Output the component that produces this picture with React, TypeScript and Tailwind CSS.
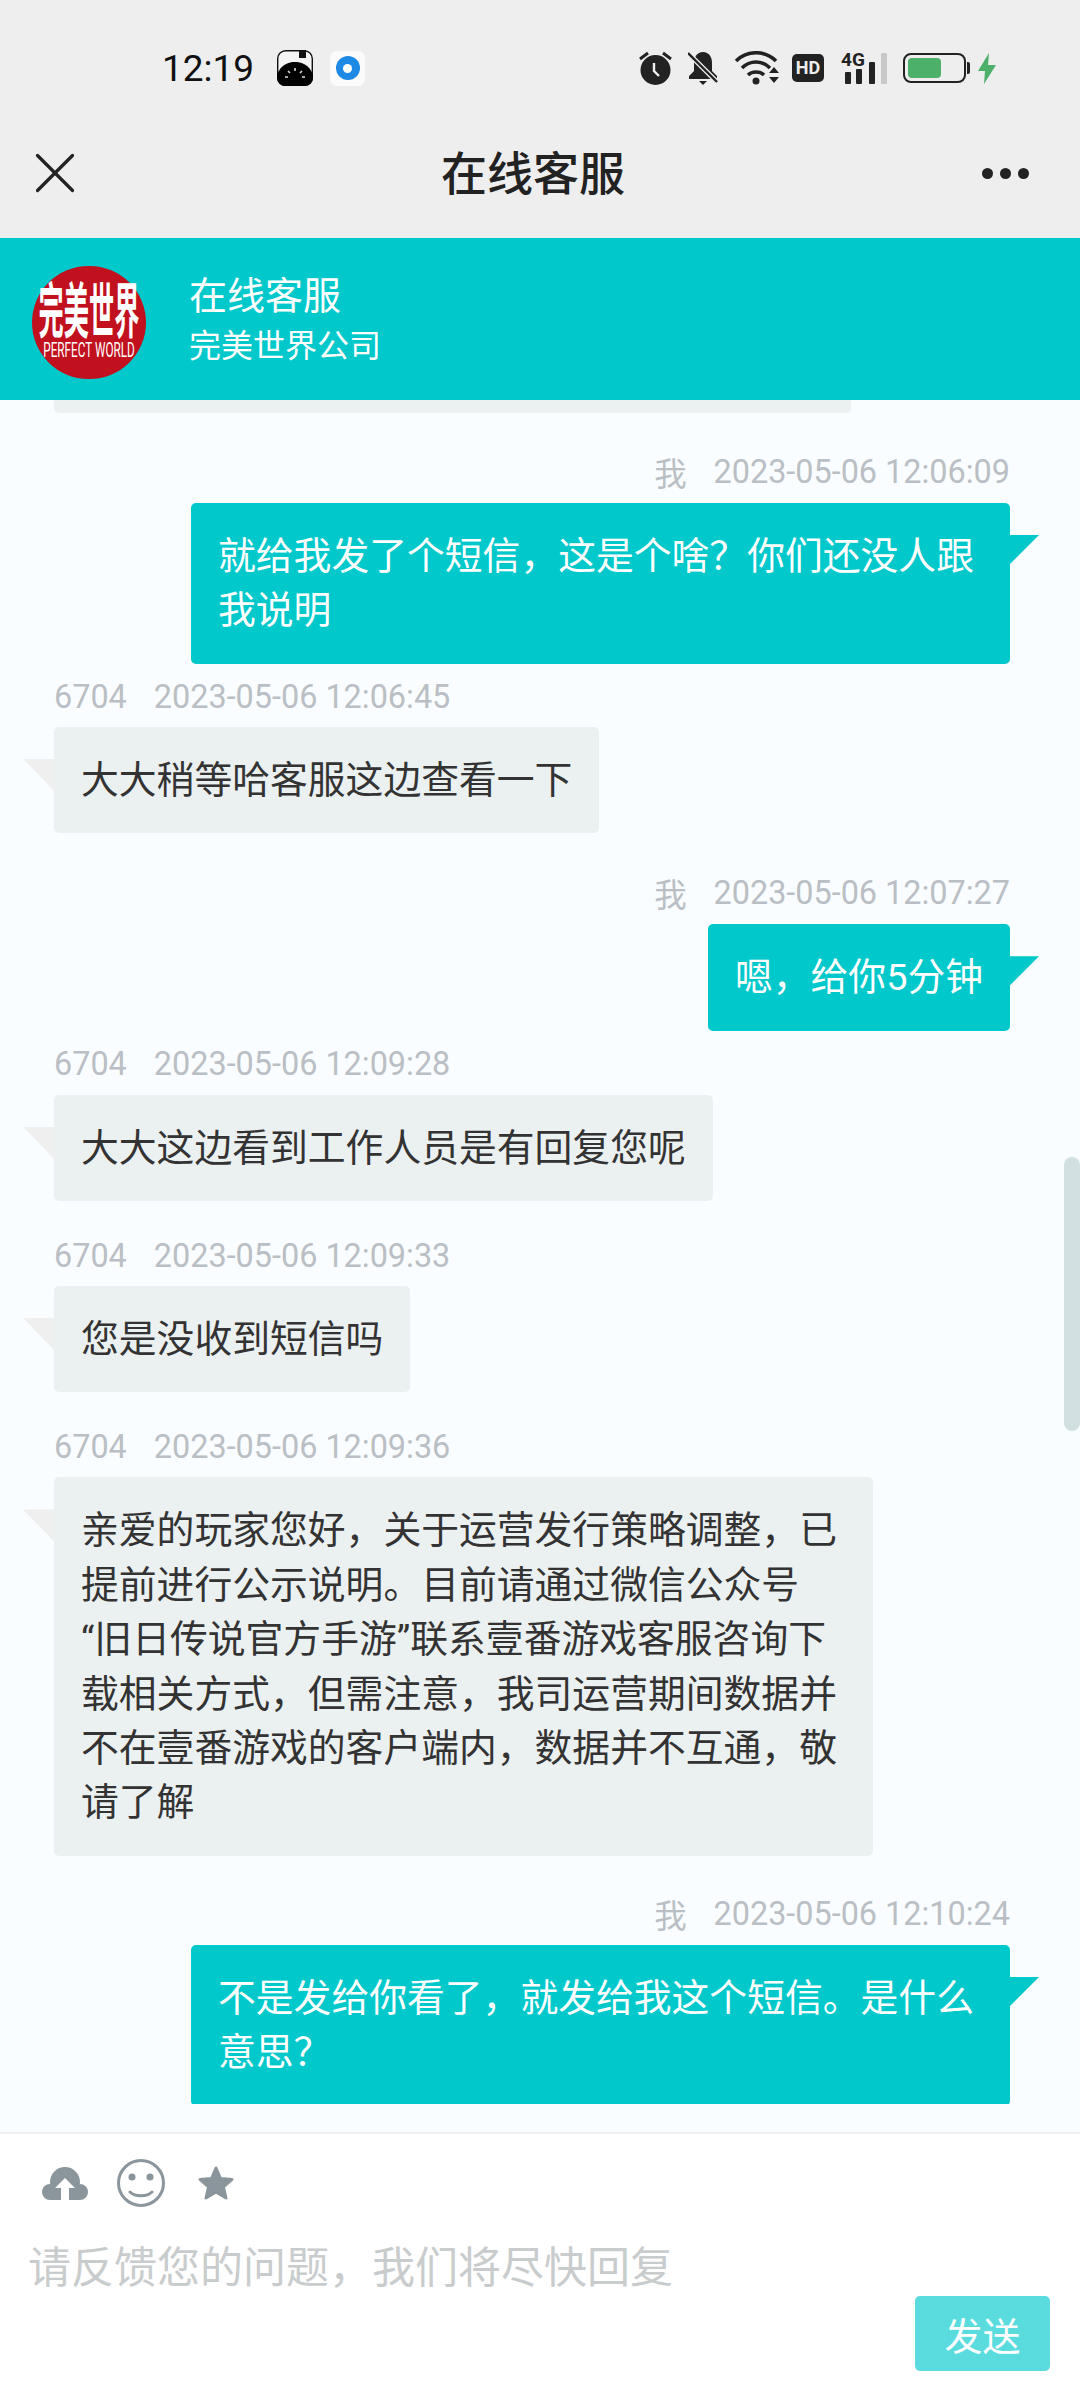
import { X } from "lucide-react";

const cjk = "font-['Noto_Sans_CJK_SC',sans-serif]";
const body = "font-['Roboto','Noto_Sans_CJK_SC',sans-serif]";

type Msg = { who: string; time: string; text: string; mine?: boolean; top: string };

const messages: Msg[] = [
  { who: "我", time: "2023-05-06 12:06:09", text: "就给我发了个短信，这是个啥？你们还没人跟我说明", mine: true, top: "mt-[37px]" },
  { who: "6704", time: "2023-05-06 12:06:45", text: "大大稍等哈客服这边查看一下", top: "mt-[11px]" },
  { who: "我", time: "2023-05-06 12:07:27", text: "嗯，给你5分钟", mine: true, top: "mt-[38px]" },
  { who: "6704", time: "2023-05-06 12:09:28", text: "大大这边看到工作人员是有回复您呢", top: "mt-[12px]" },
  { who: "6704", time: "2023-05-06 12:09:33", text: "您是没收到短信吗", top: "mt-[33px]" },
  { who: "6704", time: "2023-05-06 12:09:36", text: "亲爱的玩家您好，关于运营发行策略调整，已提前进行公示说明。目前请通过微信公众号\u200b“旧日传说官方手游”联系壹番游戏客服咨询下载相关方式，但需注意，我司运营期间数据并不在壹番游戏的客户端内，数据并不互通，敬请了解", top: "mt-[33px]" },
  { who: "我", time: "2023-05-06 12:10:24", text: "不是发给你看了，就发给我这个短信。是什么意思？", mine: true, top: "mt-[36px]" },
];

function StatusBar() {
  return (
    <div className="flex h-[136px] items-center pr-[83px] pl-[162px]">
      <span className="font-['Roboto',sans-serif] text-[37px] leading-none text-[#111]">12:19</span>
      <svg width="36" height="36" viewBox="0 0 36 36" className="ml-[23px]">
        <rect x="0.7" y="0.7" width="34.600" height="34.600" rx="8" fill="#f4f4f4" stroke="#111" strokeWidth="1.4" />
        <path d="M0 25C4 14 12 12 18 12s14 2 18 13v3a8 8 0 0 1-8 8H8a8 8 0 0 1-8-8z" fill="#000" />
        <path d="M22 0h7v8h-7z" fill="#111" />
        <path d="M18 18v3M11 21l2 2M25 21l-2 2M8 27h3M25 27h3" stroke="#ddd" strokeWidth="1.6" />
      </svg>
      <div className="ml-[17px] flex h-[35px] w-[35px] items-center justify-center rounded-[7px] bg-[#fbfbfb]">
        <div className="flex h-[24px] w-[24px] items-center justify-center rounded-full bg-[#1e88e5]">
          <div className="h-[9px] w-[9px] rounded-full bg-white" />
        </div>
      </div>
      <div className="ml-auto flex items-center">
        <svg width="33" height="34" viewBox="0 0 33 34">
          <circle cx="16.500" cy="19" r="15" fill="#222" />
          <path d="M15 12v8l5 5" stroke="#eee" strokeWidth="2.4" fill="none" />
          <path d="M1 8l8-6M32 8l-8-6" stroke="#222" strokeWidth="3" />
        </svg>
        <svg width="30" height="34" viewBox="0 0 30 34" className="ml-[16px]">
          <path d="M15 1c6 0 9 5 9 11v8l5 5v3H1v-3l5-5v-8c0-6 3-11 9-11z" fill="#222" />
          <path d="M11 30h8l-4 4z" fill="#222" />
          <path d="M1 3l28 28" stroke="#eee" strokeWidth="5" />
          <path d="M0 2l29 29" stroke="#222" strokeWidth="2.400" />
        </svg>
        <svg width="44" height="34" viewBox="0 0 44 34" className="ml-[17px]">
          <path d="M1 10c11-11 29-11 40 0" stroke="#222" strokeWidth="3.600" fill="none" />
          <path d="M7 17c8-8 20-8 28 0" stroke="#222" strokeWidth="3.600" fill="none" />
          <path d="M13 24c4-4 12-4 16 0" stroke="#222" strokeWidth="3.600" fill="none" />
          <circle cx="21" cy="30" r="3.500" fill="#222" />
          <path d="M34 22l5-6 5 6zM34 26l5 6 5-6z" fill="#222" />
        </svg>
        <div className="ml-[13px] flex h-[28px] w-[32px] items-center justify-center rounded-[5px] bg-[#222] font-['Roboto',sans-serif] text-[18px] leading-none font-bold text-[#eee]">
          HD
        </div>
        <div className="relative ml-[17px] h-[32px] w-[46px]">
          <span className="absolute top-[-3px] left-0 font-['Roboto',sans-serif] text-[19px] leading-[22px] font-bold text-[#222]">4G</span>
          <svg width="46" height="32" viewBox="0 0 46 32" className="absolute top-0 left-0">
            <rect x="4" y="20" width="6" height="12" rx="1" fill="#222" />
            <rect x="15" y="17" width="6" height="15" rx="1" fill="#222" />
            <rect x="28" y="10" width="6" height="22" rx="1" fill="#222" />
            <rect x="40" y="1" width="6" height="31" rx="1" fill="#c8c8c8" />
          </svg>
        </div>
        <div className="ml-[16px] flex h-[30px] w-[63px] items-center rounded-[8px] border-[2px] border-[#222] p-[3px]">
          <div className="h-full w-[33px] rounded-[4px] bg-[#4caf6a]" />
        </div>
        <div className="ml-[1px] h-[12px] w-[3px] rounded-r-[2px] bg-[#222]" />
        <svg width="20" height="31" viewBox="0 0 20 31" className="ml-[7px]">
          <path d="M12 0L1 18h7l-1 13 12-19h-8z" fill="#4caf6a" />
        </svg>
      </div>
    </div>
  );
}

function NavBar() {
  return (
    <div className="relative flex h-[102px] items-start justify-between pr-[51px] pl-[20px]">
      <X size={70} strokeWidth={1.1} className="mt-[2px] text-[#222]" />
      <span className={`${cjk} absolute top-[4px] left-0 w-[1066px] text-center text-[46px] leading-[60px] font-medium text-[#222]`}>在线客服</span>
      <div className="mt-[32px] flex gap-[7px]">
        <div className="h-[11px] w-[11px] rounded-full bg-[#222]" />
        <div className="h-[11px] w-[11px] rounded-full bg-[#222]" />
        <div className="h-[11px] w-[11px] rounded-full bg-[#222]" />
      </div>
    </div>
  );
}

function Logo() {
  return (
    <div className="mt-[6px] flex h-[113px] w-[114px] shrink-0 flex-col items-center rounded-full bg-[#c1101e] pt-[8px] text-white">
      <span className={`${cjk} block w-[260px] shrink-0 scale-x-[0.42] text-center text-[60px] leading-[66px] font-bold whitespace-nowrap`}>完美世界</span>
      <span className="block w-[260px] shrink-0 scale-x-[0.56] text-center font-['Roboto',sans-serif] text-[21px] leading-[20px] whitespace-nowrap">PERFECT WORLD</span>
    </div>
  );
}

function Message({ m }: { m: Msg }) {
  return (
    <div className={`${m.top} flex flex-col ${m.mine ? "items-end" : "items-start"}`}>
      <div className={`${m.mine ? "mb-[9px]" : "mb-[8px]"} flex h-[44px] items-center gap-[27px] font-['Roboto',sans-serif] text-[32.400px] leading-none text-[#b9bfc4]`}>
        <span className={m.who === "我" ? cjk : ""}>{m.who}</span>
        <span>{m.time}</span>
      </div>
      <div className={`relative max-w-[819px] rounded-[5px] px-[27px] py-[26px] ${body} text-[37.800px] leading-[54.400px] ${m.mine ? "bg-[#00c8cb] text-white" : "bg-[#ebf0f0] text-[#333]"}`}>
        {m.text}
        {m.mine ? (
          <div className="absolute top-[32px] right-[-29px] h-[29px] w-[29px] bg-[#00c8cb] [clip-path:polygon(0_0,100%_0,0_100%)]" />
        ) : (
          <div className="absolute top-[32px] left-[-31px] h-[32px] w-[31px] bg-[#efefef] [clip-path:polygon(0_0,100%_0,100%_100%)]" />
        )}
      </div>
    </div>
  );
}

function Composer() {
  return (
    <div className="h-[268px] border-t-[2px] border-[#edf1f4] bg-white">
      <div className="flex h-[74px] items-center pt-[24px] pl-[42px] text-[#8a959c]">
        <svg width="46" height="33" viewBox="0 0 46 33" fill="currentColor">
          <circle cx="23" cy="15" r="15" />
          <circle cx="8" cy="25" r="8" />
          <circle cx="38" cy="25" r="8" />
          <rect x="8" y="20" width="30" height="13" />
          <path d="M23 11l10 10h-6v12h-8V21h-6z" fill="#fff" />
        </svg>
        <svg width="48" height="48" viewBox="0 0 48 48" fill="none" stroke="currentColor" className="ml-[29px]">
          <circle cx="24" cy="24" r="22.500" strokeWidth="3" />
          <circle cx="15" cy="18" r="3.500" fill="currentColor" stroke="none" />
          <circle cx="33" cy="18" r="3.500" fill="currentColor" stroke="none" />
          <path d="M13 33c5 5 17 5 22 0" strokeWidth="3" strokeLinecap="round" />
        </svg>
        <svg width="38" height="36" viewBox="0 0 38 36" fill="currentColor" stroke="currentColor" strokeWidth="3" strokeLinejoin="round" className="ml-[32px]">
          <path d="M19 3l4.500 10.500L35 14.500l-8.500 7.500 2.500 11-10-6-10 6 2.500-11L3 14.500l11.500-1z" />
        </svg>
      </div>
      <div className={`${cjk} mt-[26px] pl-[28px] text-[43px] leading-[60px] text-[#c9cccd]`}>请反馈您的问题，我们将尽快回复</div>
      <div className="mt-[2px] flex justify-end pr-[30px]">
        <button className={`${cjk} h-[75px] w-[135px] rounded-[5px] bg-[#5adcdf] text-[38px] text-white`}>发送</button>
      </div>
    </div>
  );
}

export default function App() {
  return (
    <div className="relative flex h-[2400px] w-[1080px] flex-col overflow-hidden bg-[#f9fdff]">
      <div className="bg-[#eeeeee]">
        <StatusBar />
        <NavBar />
      </div>
      <div className="flex h-[162px] shrink-0 items-center gap-[43px] bg-[#00c8cb] pl-[32px] text-white">
        <Logo />
        <div className={`${cjk} -mt-[6px] flex flex-col`}>
          <span className="text-[38px] leading-[54px]">在线客服</span>
          <span className="text-[32px] leading-[46px]">完美世界公司</span>
        </div>
      </div>
      <div className="relative h-[1732px] shrink-0 overflow-hidden">
        <div className="ml-[54px] h-[13px] w-[797px] rounded-b-[5px] bg-[#ebf0f0]" />
        <div className="h-[1691px] overflow-hidden pr-[70px] pl-[54px]">
          {messages.map((m) => (
            <Message key={m.time} m={m} />
          ))}
        </div>
        <div className="absolute top-[757px] right-0 h-[274px] w-[16px] rounded-full bg-[#d2e0e1]" />
      </div>
      <Composer />
    </div>
  );
}
